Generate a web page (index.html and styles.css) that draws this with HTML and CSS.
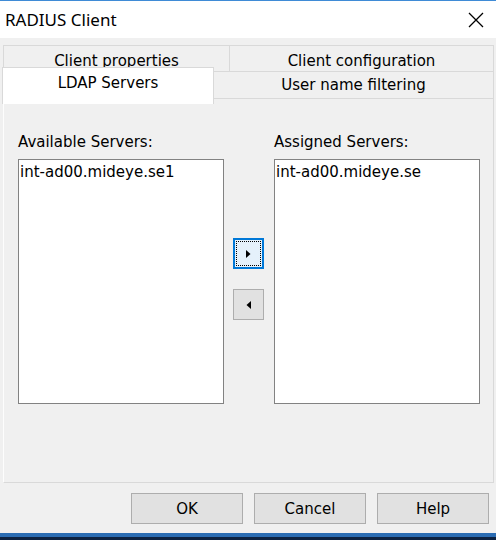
FILE: index.html
```html
<!DOCTYPE html>
<html lang="en">
<head>
<meta charset="utf-8">
<title>RADIUS Client</title>
<link rel="stylesheet" href="styles.css">
</head>
<body>
<div class="window">
  <header class="titlebar">
    <span class="title">RADIUS Client</span>
    <svg class="close" width="16" height="16" viewBox="0 0 16 16" aria-hidden="true">
      <path d="M1 1 L15 15 M15 1 L1 15" stroke="#000" stroke-width="1.3" fill="none"/>
    </svg>
  </header>

  <div class="tabs">
    <div class="tab-row back">
      <div class="tab tab-a">Client properties</div>
      <div class="tab tab-b">Client configuration</div>
    </div>
    <div class="tab-row front">
      <div class="tab tab-a selected">LDAP Servers</div>
      <div class="tab tab-b">User name filtering</div>
    </div>
  </div>

  <section class="panel">
    <div class="columns">
      <div class="col">
        <label class="caption">Available Servers:</label>
        <div class="listbox">
          <div class="item">int-ad00.mideye.se1</div>
        </div>
      </div>
      <div class="movers">
        <button class="mover focused" type="button" aria-label="Add">
          <span class="focus-ring">
            <svg width="5" height="8" viewBox="0 0 5 8"><path d="M0 0 L4.5 4 L0 8 Z" fill="#000"/></svg>
          </span>
        </button>
        <button class="mover" type="button" aria-label="Remove">
          <svg width="5" height="8" viewBox="0 0 5 8"><path d="M5 0 L0.5 4 L5 8 Z" fill="#000"/></svg>
        </button>
      </div>
      <div class="col">
        <label class="caption">Assigned Servers:</label>
        <div class="listbox">
          <div class="item">int-ad00.mideye.se</div>
        </div>
      </div>
    </div>
  </section>

  <footer class="actions">
    <button class="btn" type="button">OK</button>
    <button class="btn" type="button">Cancel</button>
    <button class="btn" type="button">Help</button>
  </footer>

  <div class="taskbar"></div>
</div>
</body>
</html>
```

FILE: styles.css
```css
html, body {
  margin: 0;
  padding: 0;
}

body {
  width: 496px;
  height: 540px;
  overflow: hidden;
  background: #f0f0f0;
  font-family: "DejaVu Sans", Verdana, sans-serif;
  font-size: 15px;
  color: #000;
}

.window {
  display: flex;
  flex-direction: column;
  height: 540px;
}

/* caption bar */
.titlebar {
  height: 37px;
  background: #fff;
  border-top: 1px solid #3f8bd6;
  display: flex;
  align-items: center;
  justify-content: space-between;
  padding: 0 12px 0 5px;
}

.title {
  font-family: "Noto Sans", "Open Sans", sans-serif;
  font-size: 17px;
  margin-top: 0;
}

.close {
  display: block;
  margin-top: 1px;
}

/* two stacked rows of tabs */
.tabs {
  margin-top: 7px;
  padding: 0 2px 0 3px;
  display: flex;
  flex-direction: column;
}

.tab-row {
  display: flex;
}

.tab {
  box-sizing: border-box;
  text-align: center;
  white-space: nowrap;
  overflow: hidden;
  background: #f0f0f0;
  border: 1px solid #d9d9d9;
  border-bottom: none;
}

.tab-row.back .tab {
  height: 26px;
  padding-top: 4px;
  line-height: 22px;
}

.tab-row.back .tab-a {
  width: 227px;
}

.tab-row.back .tab-b {
  flex: 1;
  border-left: none;
}

.tab-row.front {
  align-items: flex-start;
}

.tab-row.front .tab-b {
  flex: 1;
  height: 28px;
  line-height: 26px;
  border-bottom: 1px solid #d9d9d9;
  border-left: none;
}

.tab.selected {
  width: 212px;
  margin-left: -1px;
  margin-top: -4px;
  height: 37px;
  line-height: 24px;
  padding-top: 3px;
  background: #fff;
  border-color: #d9d9d9;
  position: relative;
  z-index: 1;
  margin-bottom: -9px;
}

/* page body */
.panel {
  box-sizing: border-box;
  height: 385px;
  margin: -1px 2px 0 3px;
  border: 1px solid #d9d9d9;
  border-left-color: #fdfdfd;
  background: #f0f0f0;
  padding: 33px 12px 0 14px;
}

.columns {
  display: flex;
  align-items: flex-start;
}

.col {
  width: 206px;
  display: flex;
  flex-direction: column;
}

.caption {
  display: block;
  height: 27px;
  line-height: 20px;
}

.listbox {
  box-sizing: border-box;
  height: 245px;
  background: #fff;
  border: 1px solid #828282;
  padding: 3px 1px;
}

.item {
  line-height: 18px;
  white-space: nowrap;
}

.movers {
  width: 31px;
  margin: 0 10px 0 9px;
  padding-top: 106px;
  display: flex;
  flex-direction: column;
  gap: 20px;
}

.mover {
  box-sizing: border-box;
  width: 31px;
  height: 31px;
  padding: 0;
  background: #e1e1e1;
  border: 1px solid #adadad;
  display: flex;
  align-items: center;
  justify-content: center;
}

.mover.focused {
  border: 2px solid #0078d7;
  background: #e5f1fb;
  padding: 1px;
}

.focus-ring {
  box-sizing: border-box;
  width: 100%;
  height: 100%;
  border: 1px dotted #000;
  display: flex;
  align-items: center;
  justify-content: center;
}

.mover svg {
  display: block;
}

/* dialog buttons */
.actions {
  display: flex;
  justify-content: flex-end;
  gap: 11px;
  padding: 10px 7px 0 0;
  height: 31px;
}

.btn {
  box-sizing: border-box;
  width: 112px;
  height: 31px;
  background: #e1e1e1;
  border: 1px solid #adadad;
  font-family: "DejaVu Sans", Verdana, sans-serif;
  font-size: 15px;
  color: #000;
  padding: 0;
}

.taskbar {
  margin-top: 9px;
  height: 7px;
  background: #0c2140;
  border-top: 4px solid #2a6cb3;
  box-sizing: border-box;
}
```
